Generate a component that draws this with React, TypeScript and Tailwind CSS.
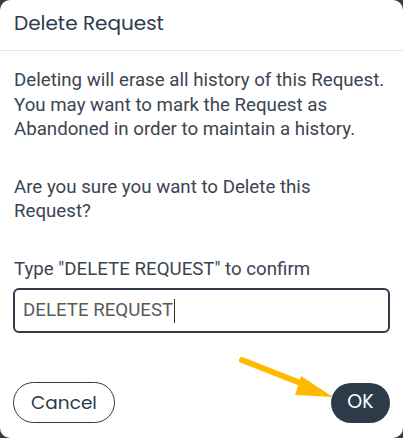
import React from "react";

export default function App() {
  return (
    <div className="w-[403px] h-[438px] bg-[#3b3b3b] overflow-hidden">
      <div className="relative w-[403px] h-[438px] bg-white rounded-[10px] flex flex-col">
        <div className="pt-[11px] pb-[15px] px-[14px] border-b border-[#e3e3e3]">
          <h2 className="font-['Poppins','Inter',sans-serif] text-[20px] leading-[24px] text-[#2f3a4a] font-normal">
            Delete Request
          </h2>
        </div>
        <div className="px-[14px] pt-[17px] font-['Roboto',sans-serif] text-[18.7px] leading-[24.5px] text-[#3b4552]">
          <p>
            Deleting will erase all history of this Request. You may want to mark the Request as Abandoned in order to maintain a history.
          </p>
          <p className="mt-[33px]">Are you sure you want to Delete this Request?</p>
          <p className="mt-[33px]">Type "DELETE REQUEST" to confirm</p>
          <div className="mt-[7px] -mx-[1px] h-[45px] border-2 border-[#2f3a4a] rounded-[6px] flex items-center px-[8px]">
            <span className="text-[#5a5a5a] text-[18.7px]">DELETE REQUEST</span>
            <span className="inline-block w-[1px] h-[24px] bg-[#333] ml-[1px]"></span>
          </div>
        </div>
        <div className="mt-auto mb-[15px] px-[13px] flex items-center justify-between">
          <button className="w-[102px] h-[41px] rounded-full border border-[#2f3a4a] font-['Poppins','Inter',sans-serif] text-[18.5px] text-[#2f3a4a]">
            Cancel
          </button>
          <button className="w-[59px] h-[40px] rounded-full bg-[#2d3a4a] font-['Poppins','Inter',sans-serif] text-[19px] text-white">
            OK
          </button>
        </div>
        <svg className="absolute left-0 top-0 pointer-events-none" width="403" height="438" viewBox="0 0 403 438">
          <line x1="242" y1="360" x2="308" y2="386" stroke="#FFBA00" strokeWidth="6" strokeLinecap="round" />
          <polygon points="333,397 301,376 295,395" fill="#FFBA00" />
        </svg>
      </div>
    </div>
  );
}
